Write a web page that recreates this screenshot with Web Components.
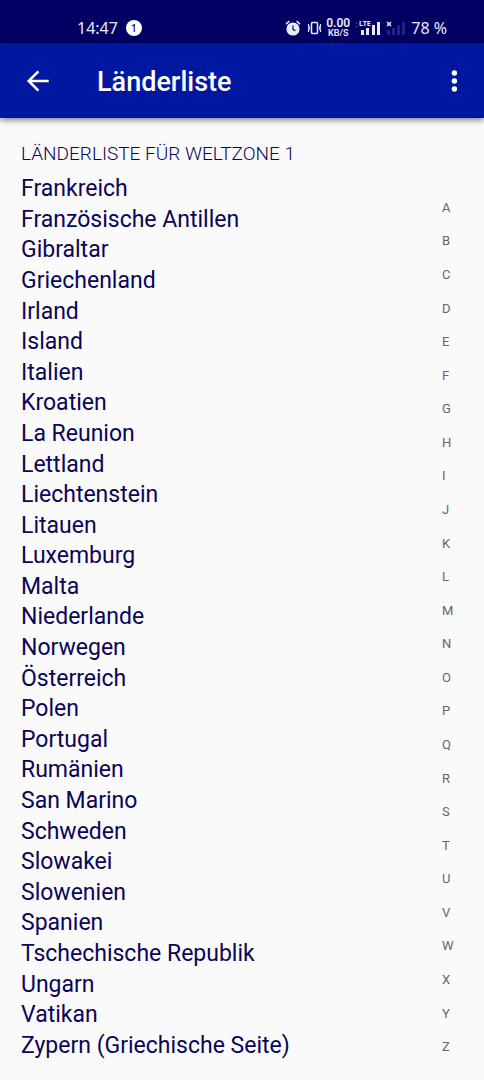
<!DOCTYPE html>
<html lang="de">
<head>
<meta charset="utf-8">
<meta name="viewport" content="width=device-width, initial-scale=1">
<title>Länderliste</title>
<style>
  html { height: 100%; }
  body { margin: 0; min-height: 100%; display: flex; flex-direction: column; background: #fafafa; font-family: Roboto, sans-serif; color: #0b0558; }
  country-page { flex: 1; }
</style>
</head>
<body>
<status-bar></status-bar>
<app-bar>Länderliste</app-bar>
<country-page>
  <span slot="heading">LÄNDERLISTE FÜR WELTZONE 1</span>
  <country-list></country-list>
  <letter-index slot="index"></letter-index>
</country-page>

<script>
class BaseElement extends HTMLElement {
  constructor() {
    super();
    this.attachShadow({ mode: 'open' }).innerHTML = this.render();
  }
}

customElements.define('status-bar', class extends BaseElement {
  render() {
    return `<style>
      :host { display: flex; align-items: center; justify-content: space-between; box-sizing: border-box; height: 43px; padding: 13px 37px 0 77px; background: #000063; color: #e8eaff; font-family: "Noto Sans", sans-serif; font-size: 16px; line-height: 24px; }
      .left, .right { display: flex; align-items: center; }
      .left { gap: 8px; }
      .badge { width: 16px; height: 16px; border-radius: 50%; background: #fff; color: #000063; font-size: 10px; font-weight: 500; line-height: 16px; text-align: center; }
      .rate { width: 26px; margin: 0 4px 0 3px; font-family: Roboto, sans-serif; font-weight: 600; font-size: 12px; line-height: 10px; white-space: nowrap; display: flex; flex-direction: column; align-items: center; }
      .rate small { font-size: 9px; line-height: 10px; }
      .battery { margin-left: 5px; white-space: pre; }
      svg { display: block; }
      .vibrate { margin-left: 6px; }
      .no-signal { margin-left: 4px; }
      .lte { font: 700 7px "Noto Sans", sans-serif; }
    </style>
    <div class="left"><span>14:47</span><span class="badge">1</span></div>
    <div class="right">
      <svg width="16" height="18" viewBox="0 0 16 18" aria-hidden="true">
        <circle cx="8" cy="10" r="6.6" fill="currentColor"/>
        <path d="M1 5.2 4.4 2M15 5.2 11.6 2" stroke="currentColor" stroke-width="1.6" fill="none"/>
        <path d="M8 6.500v3.800l2.400 1.500" stroke="#000063" stroke-width="1.2" fill="none"/>
      </svg>
      <svg class="vibrate" width="15" height="18" viewBox="0 0 15 18" aria-hidden="true">
        <rect x="4.5" y="3.500" width="6" height="11" rx="1" fill="none" stroke="currentColor" stroke-width="1.5"/>
        <path d="M1.500 5v2l1 1-1 1 1 1-1 1v2M13.500 5v2l-1 1 1 1-1 1 1 1v2" fill="none" stroke="currentColor" stroke-width="1.2"/>
      </svg>
      <span class="rate"><span>0.00</span><small>KB/S</small></span>
      <svg width="27" height="18" viewBox="0 0 27 18">
        <path d="m0 5 1.5-2L3 5zM0 7l1.5 2L3 7z" fill="#34348c"/>
        <text class="lte" x="4" y="7" fill="currentColor">LTE</text>
        <path d="M6 11h3v5H6zM11 9h3v7h-3zM17 6h3v10h-3zM22 3h3v13h-3z" fill="currentColor"/>
      </svg>
      <svg class="no-signal" width="20" height="18" viewBox="0 0 20 18" aria-hidden="true">
        <path d="M1 11h3v5H1zM6 9h3v7H6zM11 6h3v10h-3zM16 3h3v13h-3z" fill="#242480"/>
        <path d="m1 3 4 4M5 3 1 7" stroke="currentColor" stroke-width="1.5"/>
      </svg>
      <span class="battery">78 %</span>
    </div>`;
  }
});

customElements.define('app-bar', class extends BaseElement {
  render() {
    return `<style>
      :host { display: flex; align-items: center; box-sizing: border-box; height: 75px; padding: 0 18px 0 22px; background: #0018a0; color: #fff; box-shadow: 0 2px 6px rgba(0,0,0,.5); position: relative; z-index: 1; }
      h1 { flex: 1; margin: 0 0 0 43px; padding-top: 2px; font-size: 27px; line-height: 32px; font-weight: 500; }
      button { display: block; margin: 0; padding: 0; border: 0; background: none; color: inherit; }
      svg { display: block; }
    </style>
    <button type="button" aria-label="Zurück">
      <svg width="32" height="32" viewBox="0 0 32 32"><path d="M26.700 16H6.500M16.400 6.400 6.700 16l9.700 9.600" fill="none" stroke="currentColor" stroke-width="2.5"/></svg>
    </button>
    <h1><slot></slot></h1>
    <button type="button" aria-label="Weitere Optionen">
      <svg width="24" height="32" viewBox="0 0 24 32" fill="currentColor"><circle cx="12.400" cy="8" r="2.700"/><circle cx="12.400" cy="16" r="2.700"/><circle cx="12.400" cy="24" r="2.700"/></svg>
    </button>`;
  }
});

customElements.define('country-page', class extends BaseElement {
  render() {
    return `<style>
      :host { display: grid; grid-template-columns: 1fr 48px; }
      main { display: flex; flex-direction: column; padding: 24px 0 19px 21px; }
      h2 { margin: 0 0 8px; font-size: 19px; line-height: 24px; font-weight: 300; }
      ::slotted(country-list) { flex: 1; }
    </style>
    <main><h2><slot name="heading"></slot></h2><slot></slot></main>
    <slot name="index"></slot>`;
  }
});

customElements.define('country-list', class extends BaseElement {
  render() {
    const countries = ['Frankreich', 'Französische Antillen', 'Gibraltar', 'Griechenland', 'Irland', 'Island', 'Italien', 'Kroatien', 'La Reunion', 'Lettland', 'Liechtenstein', 'Litauen', 'Luxemburg', 'Malta', 'Niederlande', 'Norwegen', 'Österreich', 'Polen', 'Portugal', 'Rumänien', 'San Marino', 'Schweden', 'Slowakei', 'Slowenien', 'Spanien', 'Tschechische Republik', 'Ungarn', 'Vatikan', 'Zypern (Griechische Seite)'];
    return `<style>
      :host { display: grid; }
      ul { display: grid; grid-auto-rows: 1fr; align-items: center; margin: 0; padding: 0; list-style: none; font-size: 23px; line-height: 30px; }
    </style>
    <ul>${countries.map(c => `<li>${c}</li>`).join('')}</ul>`;
  }
});

customElements.define('letter-index', class extends BaseElement {
  render() {
    return `<style>
      :host { display: grid; padding: 73px 0 16px; }
      nav { display: grid; grid-auto-rows: 1fr; align-items: center; justify-items: start; padding-left: 6px; }
      a { color: #666; text-decoration: none; font-size: 13px; line-height: 20px; }
    </style>
    <nav aria-label="Alphabet">${[...'ABCDEFGHIJKLMNOPQRSTUVWXYZ'].map(l => `<a href="#${l}">${l}</a>`).join('')}</nav>`;
  }
});
</script>
</body>
</html>
